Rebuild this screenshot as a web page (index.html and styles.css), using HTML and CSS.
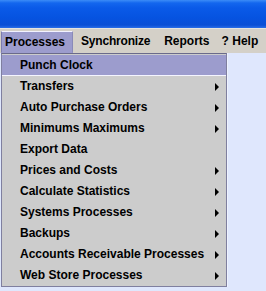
FILE: index.html
```html
<!DOCTYPE html>
<html>
<head>
<meta charset="utf-8">
<link rel="stylesheet" href="styles.css">
</head>
<body>
<div class="titlebar"></div>
<div class="menubar">
  <span class="mb-item active">Processes</span>
  <span class="mb-item">Synchronize</span>
  <span class="mb-item">Reports</span>
  <span class="mb-item">? Help</span>
</div>
<div class="menu">
  <div class="item selected">Punch Clock</div>
  <div class="item sub">Transfers</div>
  <div class="item sub">Auto Purchase Orders</div>
  <div class="item sub">Minimums Maximums</div>
  <div class="item">Export Data</div>
  <div class="item sub">Prices and Costs</div>
  <div class="item sub">Calculate Statistics</div>
  <div class="item sub">Systems Processes</div>
  <div class="item sub">Backups</div>
  <div class="item sub">Accounts Receivable Processes</div>
  <div class="item sub">Web Store Processes</div>
</div>
</body>
</html>
```
FILE: styles.css
```css
html, body {
  margin: 0;
  padding: 0;
}
body {
  width: 266px;
  height: 291px;
  overflow: hidden;
  background: #dfe7fd;
  font-family: "Liberation Sans", Arial, sans-serif;
  font-size: 12px;
  font-weight: bold;
  color: #000;
}
.titlebar {
  height: 28px;
  background: linear-gradient(to bottom, #3b8cf7 0px, #1366ee 3px, #0a5ae8 8px, #0653e0 18px, #0a4fd6 25px, #2a6ee8 28px);
}
.menubar {
  height: 24px;
  background: #d4d0c8;
  border-top: 1px solid #e6e4df;
  display: flex;
  align-items: stretch;
  padding-left: 1px;
  white-space: nowrap;
}
.mb-item {
  display: flex;
  align-items: center;
  padding: 0 5px;
  border: 1px solid transparent;
  white-space: nowrap;
}
.mb-item.active {
  background: #9c9ccd;
  border-color: #f2f2ff #8a8ab8 #9c9ccd #7c7cae;
  margin-top: 2px;
  padding: 0 7px 0 3px;
  margin-right: 2px;
}
.mb-item:nth-child(2) { letter-spacing: -0.2px; }
.mb-item:nth-child(3) { margin-left: 2px; }
.mb-item:nth-child(4) { margin-left: 0; }
.menu {
  margin-left: 1px;
  width: 224px;
  background: #cccccc;
  border: 1px solid #7f7f9f;
  border-top-color: #6a6a8a;
  padding-top: 1px;
  box-shadow: 1px 0 0 #eef2ff;
}
.item {
  height: 21px;
  line-height: 21px;
  padding-left: 18px;
  position: relative;
  white-space: nowrap;
}
.item.selected {
  background: #9c9ccd;
  height: 20px;
  line-height: 21px;
  margin-bottom: 1px;
  box-shadow: 0 1px 0 #f4f4ff;
}
.item.sub::after {
  content: "";
  position: absolute;
  left: 213px;
  top: 7px;
  border-style: solid;
  border-width: 4px 0 4px 4px;
  border-color: transparent transparent transparent #000;
}
```
